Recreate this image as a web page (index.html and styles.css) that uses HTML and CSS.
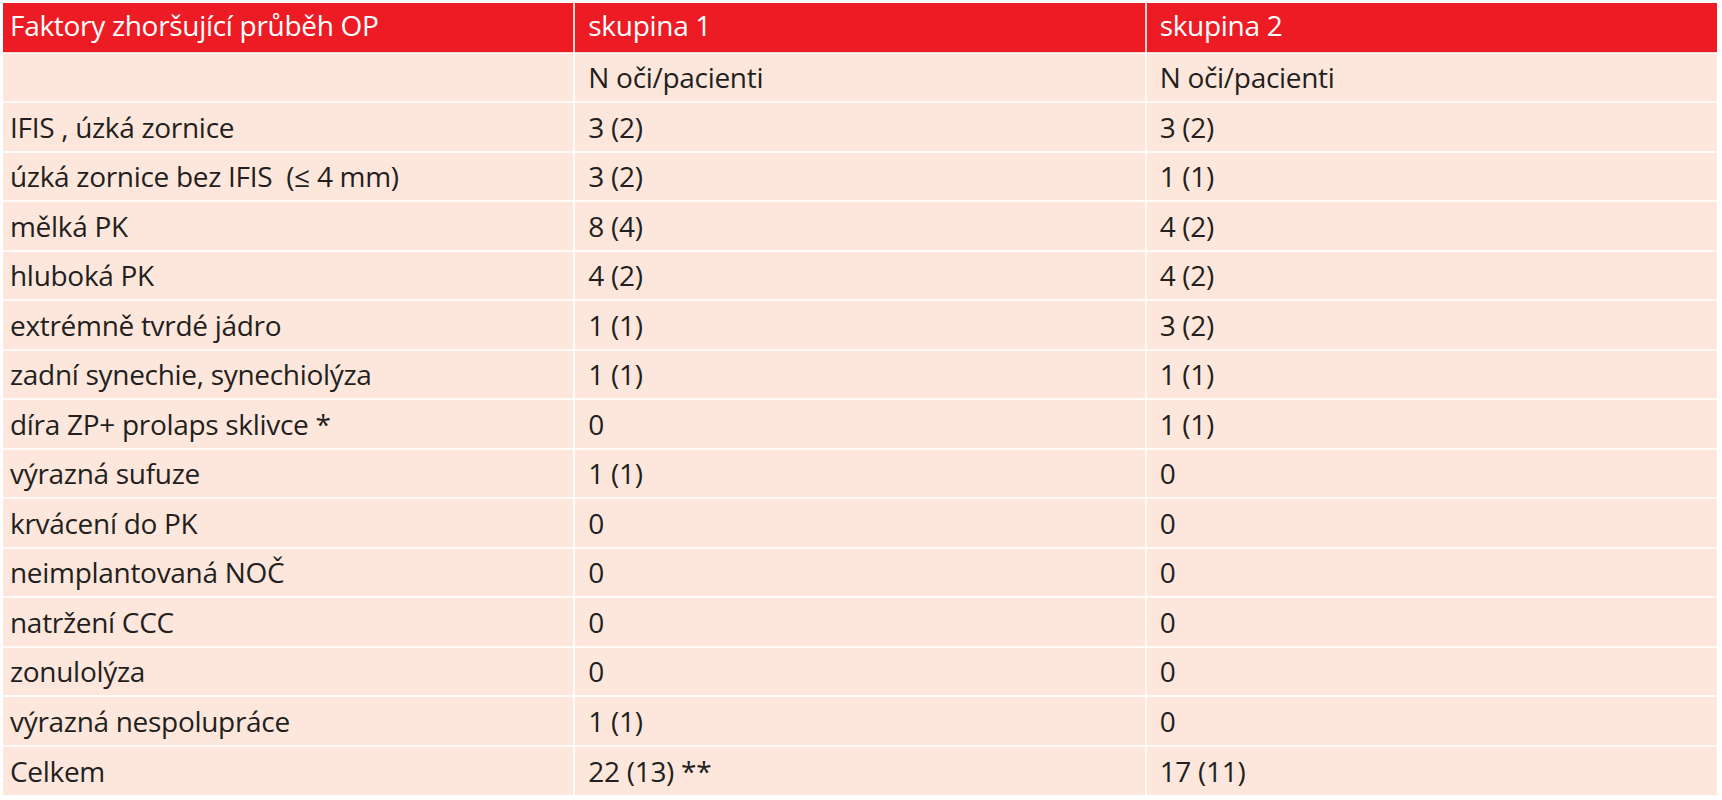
FILE: index.html
```html
<!DOCTYPE html>
<html lang="cs">
<head>
<meta charset="utf-8">
<title>Faktory zhoršující průběh OP</title>
<link rel="stylesheet" href="styles.css">
</head>
<body>
<table class="data">
  <thead>
    <tr class="head"><th>Faktory zhoršující průběh OP</th><th>skupina 1</th><th>skupina 2</th></tr>
  </thead>
  <tbody>
    <tr><td></td><td>N oči/pacienti</td><td>N oči/pacienti</td></tr>
    <tr><td>IFIS , úzká zornice</td><td>3 (2)</td><td>3 (2)</td></tr>
    <tr><td>úzká zornice bez IFIS&nbsp; (≤ 4 mm)</td><td>3 (2)</td><td>1 (1)</td></tr>
    <tr><td>mělká PK</td><td>8 (4)</td><td>4 (2)</td></tr>
    <tr><td>hluboká PK</td><td>4 (2)</td><td>4 (2)</td></tr>
    <tr><td>extrémně tvrdé jádro</td><td>1 (1)</td><td>3 (2)</td></tr>
    <tr><td>zadní synechie, synechiolýza</td><td>1 (1)</td><td>1 (1)</td></tr>
    <tr><td>díra ZP+ prolaps sklivce *</td><td>0</td><td>1 (1)</td></tr>
    <tr><td>výrazná sufuze</td><td>1 (1)</td><td>0</td></tr>
    <tr><td>krvácení do PK</td><td>0</td><td>0</td></tr>
    <tr><td>neimplantovaná NOČ</td><td>0</td><td>0</td></tr>
    <tr><td>natržení CCC</td><td>0</td><td>0</td></tr>
    <tr><td>zonulolýza</td><td>0</td><td>0</td></tr>
    <tr><td>výrazná nespolupráce</td><td>1 (1)</td><td>0</td></tr>
    <tr><td>Celkem</td><td>22 (13) **</td><td>17 (11)</td></tr>
  </tbody>
</table>
</body>
</html>
```
FILE: styles.css
```css
html, body {
  margin: 0;
  padding: 0;
  background: #ffffff;
}
body {
  padding: 3px 0 0 3px;
  font-family: "Open Sans", "Noto Sans", sans-serif;
  color: #231f20;
}
.data {
  width: 1714px;
  border-collapse: collapse;
  table-layout: fixed;
  font-size: 28px;
  letter-spacing: -0.3px;
  background: #fde7dc;
}
.data tr {
  height: 49.5px;
}
.data th,
.data td {
  border: 2px solid rgba(255, 255, 255, 0.8);
  padding: 2px 12px 0 13px;
  text-align: left;
  vertical-align: middle;
  font-weight: normal;
  white-space: nowrap;
  line-height: 1.2;
}
.data th:first-child,
.data td:first-child {
  padding-left: 7px;
}
.data tr > :first-child { border-left: none; }
.data tr > :last-child { border-right: none; }
.data thead th { border-top: none; }
.data tbody tr:last-child td { border-bottom: none; }
.data .head th {
  background: #ed1c24;
  color: #ffffff;
  padding-top: 0;
  padding-bottom: 3px;
}
```
